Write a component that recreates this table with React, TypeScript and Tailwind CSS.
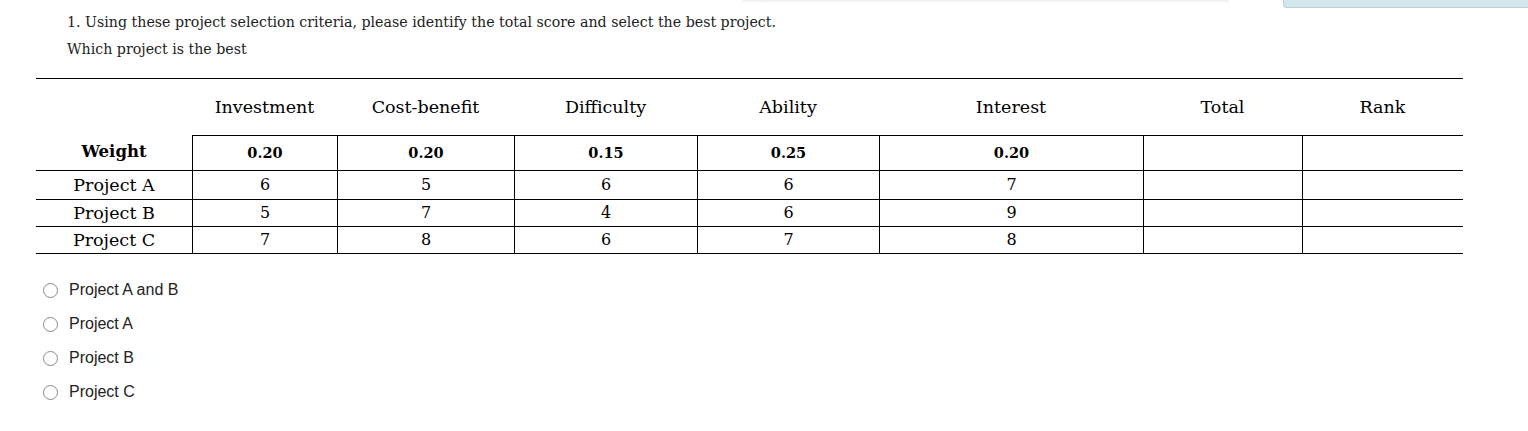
import React from "react";

const headers = ["Investment", "Cost-benefit", "Difficulty", "Ability", "Interest", "Total", "Rank"];
const weights = ["0.20", "0.20", "0.15", "0.25", "0.20", "", ""];
const rows: { name: string; vals: string[]; h: string }[] = [
  { name: "Project A", vals: ["6", "5", "6", "6", "7", "", ""], h: "h-[29px]" },
  { name: "Project B", vals: ["5", "7", "4", "6", "9", "", ""], h: "h-[27px]" },
  { name: "Project C", vals: ["7", "8", "6", "7", "8", "", ""], h: "h-[27px]" },
];
const options = ["Project A and B", "Project A", "Project B", "Project C"];

const gridCols = "grid grid-cols-[156px_145px_177px_183px_182px_264px_159px_161px]";

export default function App() {
  return (
    <div className="relative w-[1528px] h-[431px] bg-white overflow-hidden">
      {/* faint header shadow and corner panel (overlays from page chrome) */}
      <div className="absolute left-[742px] top-0 w-[487px] h-[3px] bg-gradient-to-b from-[#ececec] to-white" />
      <div className="absolute left-[1283px] top-0 w-[245px] h-[8px] bg-[#d3e7ed] border-b border-l border-[#b9d3dc] rounded-bl-[4px]" />

      <div className="pt-[9px] pl-[67px] text-[#222] font-['DejaVu_Serif',serif] text-[14.2px] leading-[27px]">
        <p>1. Using these project selection criteria, please identify the total score and select the best project.</p>
        <p>Which project is the best</p>
      </div>

      <div className="ml-[36px] mt-[15px] w-[1427px] border-t border-black font-['DejaVu_Serif',serif] text-black">
        {/* header */}
        <div className={`${gridCols} h-[56px] items-center text-[17.5px]`}>
          <div />
          {headers.map((h) => (
            <div key={h} className="text-center">{h}</div>
          ))}
        </div>
        {/* weight row */}
        <div className={`${gridCols} h-[36px] text-[14.5px] font-bold`}>
          <div className="flex items-center justify-center border-b border-black text-[16.5px]">Weight</div>
          {weights.map((w, i) => (
            <div key={i} className="flex items-center justify-center border-t border-l border-b border-black">{w}</div>
          ))}
        </div>
        {rows.map((r) => (
          <div key={r.name} className={`${gridCols} ${r.h} text-[16px]`}>
            <div className="flex items-center justify-center border-b border-black text-[17.5px]">{r.name}</div>
            {r.vals.map((v, i) => (
              <div key={i} className="flex items-center justify-center border-l border-b border-black">{v}</div>
            ))}
          </div>
        ))}
      </div>

      <div className="mt-[26px] ml-[43px] flex flex-col gap-[14px] font-['Liberation_Sans',sans-serif] text-[16px] text-[#222]">
        {options.map((o) => (
          <label key={o} className="flex items-center h-[20px]">
            <span className="w-[15px] h-[15px] rounded-full border border-[#8a8a8a] bg-white" />
            <span className="ml-[11px]">{o}</span>
          </label>
        ))}
      </div>
    </div>
  );
}
